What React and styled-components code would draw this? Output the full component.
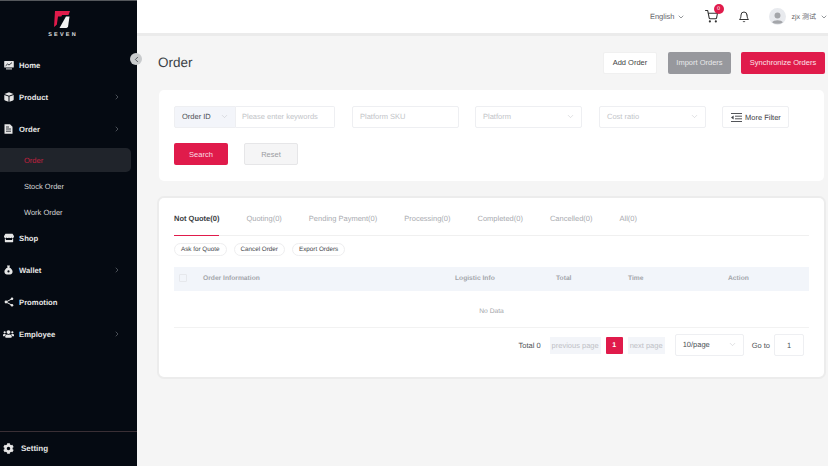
import React from 'react'
import styled, { createGlobalStyle } from 'styled-components'
import { FaStore, FaUsers, FaCog } from 'react-icons/fa'
import { FiChevronDown, FiChevronRight, FiChevronLeft, FiShoppingCart, FiBell } from 'react-icons/fi'

const red = '#e01b4b'

const GlobalStyle = createGlobalStyle`
  html, body { margin: 0; padding: 0; height: 100%; }
  body {
    font-family: "Liberation Sans", Arial, "Noto Sans CJK SC", sans-serif;
    background: #f5f5f5;
    overflow: hidden;
    text-rendering: geometricPrecision;
  }
  * { box-sizing: border-box; }
`

const Page = styled.div`
  display: flex;
  width: 828px;
  height: 466px;
  overflow: hidden;
`

// sidebar
const Sidebar = styled.aside`
  position: relative;
  display: flex;
  flex-direction: column;
  flex: 0 0 137px;
  background: #050a12;
  border-top: 1px solid #55585c;
`
const LogoBox = styled.div`
  display: flex;
  flex-direction: column;
  align-items: center;
  height: 48px;
  padding: 9px 13px 0 0;
`
const LogoWord = styled.div`
  color: #e4e4e4;
  font-size: 5.5px;
  font-weight: 700;
  letter-spacing: 2.2px;
  margin-left: 2px;
  margin-top: 3px;
`
const Menu = styled.nav`
  display: flex;
  flex-direction: column;
  flex: 1;
`
const MenuItem = styled.div`
  display: flex;
  align-items: center;
  height: 32px;
  padding-left: 3px;
  color: #e6e6e6;
  font-size: 7.7px;
  font-weight: 700;
  margin-top: ${(p) => (p.$tight ? '-3px' : '0')};
`
const MenuIcon = styled.span`
  display: flex;
  align-items: center;
  justify-content: center;
  width: 11px;
  margin-right: ${(p) => p.$gap || 5}px;
  svg { display: block; }
`
const MenuArrow = styled(FiChevronRight)`
  margin-left: auto;
  margin-right: 16px;
  color: #6d7178;
  font-size: 8px;
`
const SubMenu = styled.div`
  display: flex;
  flex-direction: column;
  padding-top: 2px;
`
const SubItem = styled.div`
  display: flex;
  align-items: center;
  width: 131px;
  height: 24px;
  margin: 1px 0;
  padding-left: 24px;
  font-size: 7.5px;
  color: ${(p) => (p.$active ? '#c4213f' : '#d8d8d8')};
  background: ${(p) => (p.$active ? '#20242b' : 'transparent')};
  border-radius: 0 5px 5px 0;
`
const SettingRow = styled.div`
  display: flex;
  align-items: center;
  height: 34px;
  margin-bottom: 1px;
  padding-left: 3px;
  border-top: 1px solid #3a2f35;
  color: #e6e6e6;
  font-size: 8px;
  font-weight: 700;
`
const Collapse = styled.div`
  position: absolute;
  top: 52px;
  right: -5px;
  width: 12px;
  height: 12px;
  border-radius: 50%;
  background: #c9cbcd;
  color: #33373c;
  display: flex;
  align-items: center;
  justify-content: center;
  font-size: 9px;
`

// right side
const Main = styled.div`
  display: flex;
  flex-direction: column;
  flex: 1;
  min-width: 0;
`
const TopBar = styled.header`
  display: flex;
  align-items: center;
  justify-content: flex-end;
  height: 36px;
  flex: none;
  background: #fff;
  border-bottom: 3px solid #ebebeb;
  font-size: 7.5px;
  color: #5f6368;
`
const Lang = styled.div`
  display: flex;
  align-items: center;
  gap: 2px;
  margin-right: 20px;
`
const CartWrap = styled.div`
  position: relative;
  display: flex;
  margin-right: 20px;
  color: #333;
  font-size: 13px;
`
const Badge = styled.span`
  position: absolute;
  top: -6px;
  right: -6px;
  width: 10px;
  height: 10px;
  border-radius: 50%;
  background: ${red};
  color: #fff;
  font-size: 5.5px;
  line-height: 10px;
  text-align: center;
`
const Bell = styled(FiBell)`
  color: #333;
  font-size: 12px;
  margin-right: 19px;
`
const User = styled.div`
  display: flex;
  align-items: center;
  gap: 4px;
  font-size: 7px;
  white-space: nowrap;
`
const Avatar = styled.span`
  display: flex;
  width: 17px;
  height: 17px;
  margin-right: 2px;
`
const Content = styled.main`
  flex: 1;
  padding: 0 4px 0 22px;
`
const TitleRow = styled.div`
  display: flex;
  align-items: center;
  height: 54px;
  margin: 0 -1px 0 -1px;
  padding-bottom: 1px;
`
const Title = styled.h1`
  margin: 0 auto 0 0;
  font-size: 13.5px;
  font-weight: 400;
  color: #3b3f45;
`
const ActionButton = styled.button`
  width: ${(p) => p.$w}px;
  height: 22px;
  padding: 0;
  margin-left: ${(p) => p.$gap || 0}px;
  font: 400 7.5px "Liberation Sans", Arial, sans-serif;
  border-radius: 2px;
  border: ${(p) => (p.$kind === 'white' ? '1px solid #f0f0f0' : 'none')};
  background: ${(p) => (p.$kind === 'red' ? red : p.$kind === 'gray' ? '#97989d' : '#fff')};
  color: ${(p) => (p.$kind === 'white' ? '#444' : p.$kind === 'gray' ? '#e8e8ea' : '#fbe3e9')};
`
const FilterCard = styled.section`
  height: 91px;
  padding: 16px 15px;
  background: #fff;
  border-radius: 5px;
`
const FilterRow = styled.div`
  display: flex;
  align-items: center;
  height: 22px;
`
const SelectBox = styled.div`
  display: flex;
  align-items: center;
  justify-content: space-between;
  flex: none;
  width: ${(p) => p.$w}px;
  height: 22px;
  margin-left: ${(p) => p.$gap || 0}px;
  padding: 0 6px 1px 7px;
  font-size: 7.5px;
  color: ${(p) => (p.$dark ? '#4a4d52' : '#c2c4c8')};
  background: ${(p) => (p.$dark ? '#f3f5fa' : '#fff')};
  border: 1px solid #eeeff2;
  border-radius: ${(p) => (p.$dark ? '2px 0 0 2px' : '2px')};
  svg { color: #c4c6ca; font-size: 9px; stroke-width: 1.4; }
`
const KeywordBox = styled(SelectBox)`
  border-left: none;
  border-radius: 0 2px 2px 0;
  padding-left: 6px;
`
const MoreFilter = styled.div`
  display: flex;
  align-items: center;
  gap: 3px;
  flex: none;
  width: 67px;
  height: 22px;
  margin-left: 16px;
  padding-left: 8px;
  font-size: 7.5px;
  color: #3f4246;
  border: 1px solid #eeeff2;
  border-radius: 2px;
`
const ButtonRow = styled.div`
  display: flex;
  gap: 16px;
  margin-top: 15px;
`
const FormButton = styled.button`
  width: 54px;
  height: 22px;
  padding: 0;
  font: 400 7.5px "Liberation Sans", Arial, sans-serif;
  border-radius: 2px;
  border: ${(p) => (p.$primary ? 'none' : '1px solid #e6e6e8')};
  background: ${(p) => (p.$primary ? red : '#f5f5f6')};
  color: ${(p) => (p.$primary ? '#fbdde4' : '#9a9ca1')};
`
const TableCard = styled.section`
  height: 179px;
  margin-top: 17px;
  padding: 0 15px;
  background: #fff;
  border-radius: 5px;
  box-shadow: 0 0 0 2px #ececec;
`
const Tabs = styled.div`
  display: flex;
  gap: 27px;
  height: 38px;
  border-bottom: 1px solid #f0f0f0;
`
const Tab = styled.div`
  display: flex;
  align-items: center;
  height: 38px;
  padding-top: 3px;
  font-size: 7.5px;
  font-weight: ${(p) => (p.$active ? 700 : 400)};
  color: ${(p) => (p.$active ? '#3a3d42' : '#a9abb0')};
  border-bottom: ${(p) => (p.$active ? `1px solid ${red}` : 'none')};
`
const Pills = styled.div`
  display: flex;
  gap: 7px;
  margin-top: 7px;
`
const Pill = styled.div`
  display: flex;
  align-items: center;
  height: 13px;
  padding: 0 6px;
  font-size: 6.3px;
  color: #44474c;
  border: 1px solid #eeeeef;
  border-radius: 7px;
`
const TableHead = styled.div`
  display: grid;
  grid-template-columns: 24px 252px 101px 72px 100px 1fr;
  align-items: center;
  height: 24px;
  margin-top: 11px;
  padding: 0 0 2px 5px;
  background: #f2f5fa;
  font-size: 6.7px;
  font-weight: 700;
  color: #a3a5aa;
`
const HeadCheck = styled.span`
  width: 8px;
  height: 8px;
  border: 1px solid #e6e8ec;
  border-radius: 1px;
`
const Empty = styled.div`
  display: flex;
  align-items: center;
  justify-content: center;
  height: 37px;
  padding-top: 4px;
  font-size: 6.7px;
  color: #a3a5aa;
  border-bottom: 1px solid #f2f2f2;
`
const Pager = styled.div`
  display: flex;
  align-items: center;
  justify-content: flex-end;
  height: 34px;
  padding-right: 5px;
  font-size: 7.5px;
  color: #4c4f54;
`
const PageTotal = styled.span`
  margin-right: 9px;
`
const PageStep = styled.span`
  display: flex;
  align-items: center;
  justify-content: center;
  width: ${(p) => p.$w}px;
  height: 17px;
  background: #f3f5f9;
  color: #bfc1c6;
`
const PageNum = styled.span`
  display: flex;
  align-items: center;
  justify-content: center;
  width: 17px;
  height: 17px;
  margin: 0 5px;
  background: ${red};
  color: #fff;
  font-weight: 700;
  font-size: 7px;
  border-radius: 1px;
`
const PageSize = styled(SelectBox)`
  margin-left: 10px;
  color: #4c4f54;
`
const GoLabel = styled.span`
  margin: 0 4px 0 8px;
`
const GoInput = styled.div`
  display: flex;
  align-items: center;
  justify-content: center;
  width: 30px;
  height: 22px;
  border: 1px solid #eeeff2;
  border-radius: 2px;
`

const Logo = () => (
  <svg width="18" height="19" viewBox="0 0 18 19">
    <path d="M2 1 H17 L15.5 5 H9 L6 13 L1 17 Z" fill="#e01b4b" />
    <path d="M5 6.5 H11 L7 14 L3.5 17 Z" fill="#050a12" />
    <path d="M13 6.5 H16.5 L15 17 L13.5 18 H6.5 Z" fill="#f2f2f2" />
  </svg>
)
const HomeIcon = () => (
  <svg width="10" height="10" viewBox="0 0 10 10">
    <rect x="0.2" y="1" width="9.6" height="6.6" rx="0.6" fill="#e6e6e6" />
    <path d="M1.6 5.8 L3.6 4 L5 5 L8 2.6" stroke="#050a12" strokeWidth="0.8" fill="none" />
    <rect x="2" y="8.4" width="6" height="1" fill="#e6e6e6" />
  </svg>
)
const BoxIcon = () => (
  <svg width="10" height="10" viewBox="0 0 10 10">
    <path d="M5 0.2 L9.6 2 L5 3.8 L0.4 2 Z" fill="#e6e6e6" />
    <path d="M0.3 3 L4.5 4.6 V9.8 L1 8.4 C0.5 8.2 0.3 7.9 0.3 7.4 Z" fill="#e6e6e6" />
    <path d="M9.7 3 L5.5 4.6 V9.8 L9 8.4 C9.5 8.2 9.7 7.9 9.7 7.4 Z" fill="#e6e6e6" />
  </svg>
)
const OrderIcon = () => (
  <svg width="9" height="10" viewBox="0 0 9 10">
    <path d="M0.5 0.3 H6 L8.5 2.8 V9.7 H0.5 Z" fill="#e6e6e6" />
    <path d="M2 3 H5 M2 5 H7 M2 7.2 H7" stroke="#050a12" strokeWidth="0.8" />
  </svg>
)
const WalletIcon = () => (
  <svg width="9" height="10" viewBox="0 0 9 10">
    <path d="M3 0.5 H6 L5.4 2.4 C7.4 3.4 8.6 5 8.6 6.8 C8.6 8.8 7 9.6 4.5 9.6 C2 9.6 0.4 8.8 0.4 6.8 C0.4 5 1.6 3.4 3.6 2.4 Z" fill="#e6e6e6" />
    <circle cx="4.5" cy="6.4" r="1.1" fill="#050a12" />
  </svg>
)
const ShareIcon = () => (
  <svg width="10" height="10" viewBox="0 0 10 10">
    <path d="M8 1.8 L2 5 L8 8.2" stroke="#e6e6e6" strokeWidth="1" fill="none" />
    <circle cx="8" cy="1.8" r="1.3" fill="#e6e6e6" />
    <circle cx="2" cy="5" r="1.4" fill="#e6e6e6" />
    <circle cx="8" cy="8.2" r="1.3" fill="#e6e6e6" />
  </svg>
)
const FilterIcon = () => (
  <svg width="11" height="9" viewBox="0 0 11 9">
    <path d="M0 0.5 H11 M4 3.2 H11 M4 5.8 H11 M0 8.5 H11" stroke="#3f4246" strokeWidth="0.9" />
    <path d="M2.6 2.6 V6.4 L0 4.5 Z" fill="#3f4246" />
  </svg>
)
const UserIcon = () => (
  <svg width="17" height="17" viewBox="0 0 16 16">
    <circle cx="8" cy="8" r="8" fill="#e8eaee" />
    <circle cx="8" cy="7" r="2.8" fill="#a4a6aa" />
    <path d="M3 13.5 C4 10.8 12 10.8 13 13.5 C11.5 15.4 4.5 15.4 3 13.5 Z" fill="#a4a6aa" />
  </svg>
)

const menuTop = [
  { label: 'Home', icon: <HomeIcon /> },
  { label: 'Product', icon: <BoxIcon />, arrow: true },
  { label: 'Order', icon: <OrderIcon />, arrow: true },
]
const menuBottom = [
  { label: 'Shop', icon: <FaStore size={10} />, tight: true },
  { label: 'Wallet', icon: <WalletIcon />, arrow: true },
  { label: 'Promotion', icon: <ShareIcon /> },
  { label: 'Employee', icon: <FaUsers size={12} />, arrow: true },
]
const tabs = ['Not Quote(0)', 'Quoting(0)', 'Pending Payment(0)', 'Processing(0)', 'Completed(0)', 'Cancelled(0)', 'All(0)']
const columns = ['Order Information', 'Logistic Info', 'Total', 'Time', 'Action']

const renderItem = (item) => (
  <MenuItem key={item.label} $tight={item.tight}>
    <MenuIcon>{item.icon}</MenuIcon>
    {item.label}
    {item.arrow && <MenuArrow />}
  </MenuItem>
)

export default function App() {
  return (
    <Page>
      <GlobalStyle />
      <Sidebar>
        <LogoBox>
          <Logo />
          <LogoWord>SEVEN</LogoWord>
        </LogoBox>
        <Menu>
          {menuTop.map(renderItem)}
          <SubMenu>
            <SubItem $active>Order</SubItem>
            <SubItem>Stock Order</SubItem>
            <SubItem>Work Order</SubItem>
          </SubMenu>
          {menuBottom.map(renderItem)}
        </Menu>
        <SettingRow>
          <MenuIcon $gap={7}>
            <FaCog size={11} />
          </MenuIcon>
          Setting
        </SettingRow>
        <Collapse>
          <FiChevronLeft />
        </Collapse>
      </Sidebar>
      <Main>
        <TopBar>
          <Lang>
            English <FiChevronDown size={8} />
          </Lang>
          <CartWrap>
            <FiShoppingCart />
            <Badge>0</Badge>
          </CartWrap>
          <Bell />
          <User>
            <Avatar>
              <UserIcon />
            </Avatar>
            <span>zjx 测试</span>
            <FiChevronDown size={8} />
          </User>
        </TopBar>
        <Content>
          <TitleRow>
            <Title>Order</Title>
            <ActionButton $kind="white" $w={54}>Add Order</ActionButton>
            <ActionButton $kind="gray" $w={63} $gap={11}>Import Orders</ActionButton>
            <ActionButton $kind="red" $w={84} $gap={10}>Synchronize Orders</ActionButton>
          </TitleRow>
          <FilterCard>
            <FilterRow>
              <SelectBox $w={62} $dark>
                Order ID <FiChevronDown />
              </SelectBox>
              <KeywordBox $w={99}>Please enter keywords</KeywordBox>
              <SelectBox $w={107} $gap={17}>Platform SKU</SelectBox>
              <SelectBox $w={107} $gap={16}>
                Platform <FiChevronDown />
              </SelectBox>
              <SelectBox $w={107} $gap={17}>
                Cost ratio <FiChevronDown />
              </SelectBox>
              <MoreFilter>
                <FilterIcon />
                More Filter
              </MoreFilter>
            </FilterRow>
            <ButtonRow>
              <FormButton $primary>Search</FormButton>
              <FormButton>Reset</FormButton>
            </ButtonRow>
          </FilterCard>
          <TableCard>
            <Tabs>
              {tabs.map((t, i) => (
                <Tab key={t} $active={i === 0}>{t}</Tab>
              ))}
            </Tabs>
            <Pills>
              <Pill>Ask for Quote</Pill>
              <Pill>Cancel Order</Pill>
              <Pill>Export Orders</Pill>
            </Pills>
            <TableHead>
              <HeadCheck />
              {columns.map((c) => (
                <span key={c}>{c}</span>
              ))}
            </TableHead>
            <Empty>No Data</Empty>
            <Pager>
              <PageTotal>Total 0</PageTotal>
              <PageStep $w={51}>previous page</PageStep>
              <PageNum>1</PageNum>
              <PageStep $w={37}>next page</PageStep>
              <PageSize $w={69}>
                10/page <FiChevronDown />
              </PageSize>
              <GoLabel>Go to</GoLabel>
              <GoInput>1</GoInput>
            </Pager>
          </TableCard>
        </Content>
      </Main>
    </Page>
  )
}
